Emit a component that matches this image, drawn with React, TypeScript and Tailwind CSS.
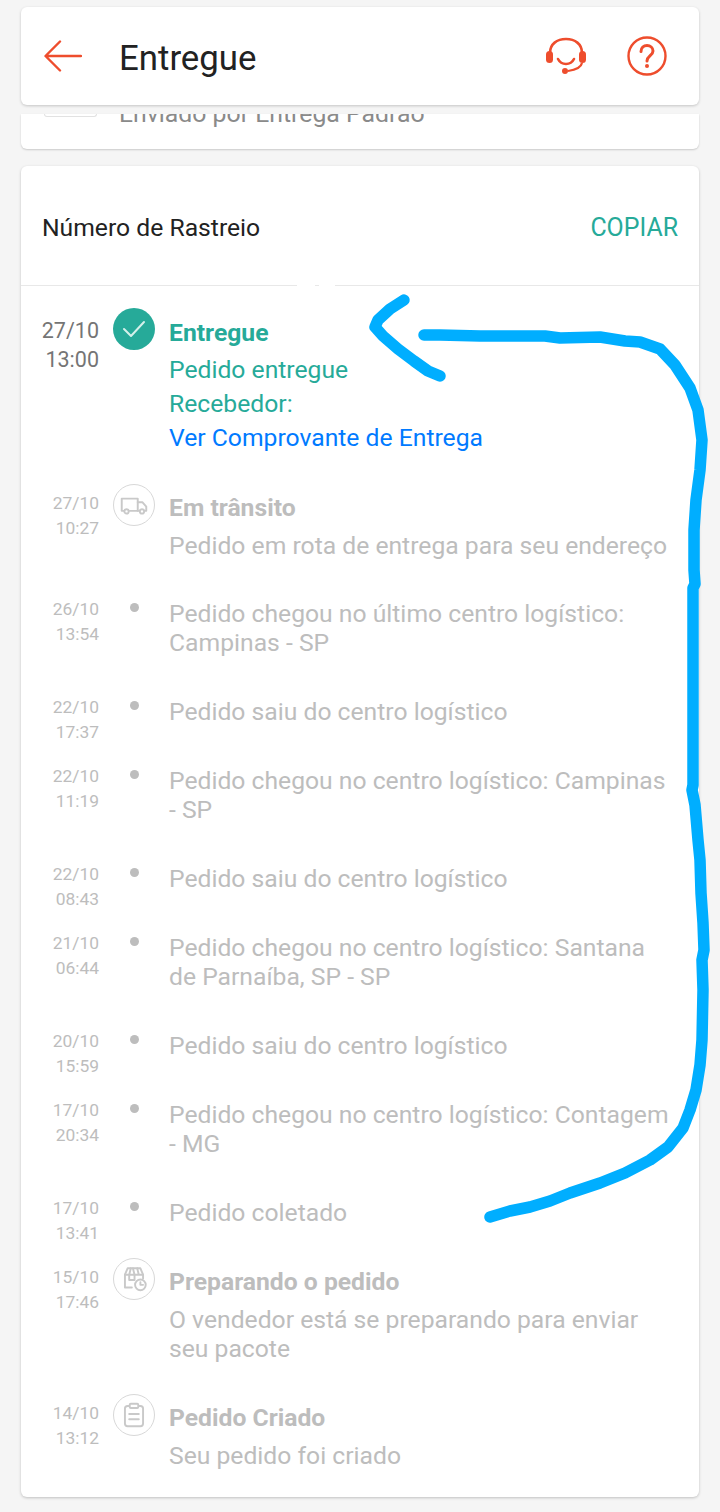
import React from "react";

const font = { fontFamily: "Roboto, 'Noto Sans', sans-serif" };

type Row = {
  date: string;
  time: string;
  title?: string;
  body: string;
  icon?: "truck" | "box" | "clip";
  pb?: string;
};

const rows: Row[] = [
  { date: "27/10", time: "10:27", title: "Em trânsito", body: "Pedido em rota de entrega para seu endereço", icon: "truck", pb: "pb-[39px]" },
  { date: "26/10", time: "13:54", body: "Pedido chegou no último centro logístico: Campinas - SP" },
  { date: "22/10", time: "17:37", body: "Pedido saiu do centro logístico" },
  { date: "22/10", time: "11:19", body: "Pedido chegou no centro logístico: Campinas - SP" },
  { date: "22/10", time: "08:43", body: "Pedido saiu do centro logístico" },
  { date: "21/10", time: "06:44", body: "Pedido chegou no centro logístico: Santana de Parnaíba, SP - SP" },
  { date: "20/10", time: "15:59", body: "Pedido saiu do centro logístico" },
  { date: "17/10", time: "20:34", body: "Pedido chegou no centro logístico: Contagem - MG" },
  { date: "17/10", time: "13:41", body: "Pedido coletado" },
  { date: "15/10", time: "17:46", title: "Preparando o pedido", body: "O vendedor está se preparando para enviar seu pacote", icon: "box" },
  { date: "14/10", time: "13:12", title: "Pedido Criado", body: "Seu pedido foi criado", icon: "clip", pb: "pb-[26px]" },
];

function RowIcon({ icon }: { icon: "truck" | "box" | "clip" }) {
  return (
    <div className="w-[42px] h-[42px] rounded-full border border-[#d8d8d8] flex items-center justify-center">
      <svg width="32" height="32" viewBox="0 0 30 30" fill="none" stroke="#c9c9c9" strokeWidth="1.8" strokeLinejoin="round" strokeLinecap="round">
        {icon === "truck" && (
          <>
            <path d="M5.500 20.500H3.500V9h15v11.500H11" />
            <path d="M18.500 12.500h4.500l3.500 4v4h-1.500M18.500 20.500h1.500" />
            <circle cx="8" cy="21" r="2" />
            <circle cx="22.500" cy="21" r="2" />
          </>
        )}
        {icon === "box" && (
          <>
            <path d="M13 23H6.500V11L9 5h12l2.500 6v3.500" />
            <path d="M6.500 11h17M12 5l-1.500 6v5h5v-5L14 5M18 5l1.500 6" />
            <circle cx="21" cy="20.500" r="5" />
            <path d="M21 18v2.500h2.500" />
          </>
        )}
        {icon === "clip" && (
          <>
            <rect x="6.500" y="6.500" width="17" height="19" rx="2.500" />
            <rect x="11" y="4.500" width="8" height="4" rx="1" fill="#fff" />
            <path d="M10.500 14h9M10.500 19h9" />
          </>
        )}
      </svg>
    </div>
  );
}

export default function App() {
  return (
    <div className="relative w-[720px] h-[1512px] overflow-hidden bg-[#f5f5f5] px-[21px] pt-[7px]" style={font}>
      {/* Top bar */}
      <header className="h-[98px] bg-white rounded-[6px] shadow-[0_1px_3px_rgba(0,0,0,0.2)] flex items-center pl-[23px] pr-[32px]">
        <svg width="38" height="32" viewBox="0 0 38 32" fill="none" stroke="#ee4d2d" strokeWidth="2.400" strokeLinecap="round" strokeLinejoin="round">
          <path d="M37 16H2M16 1.500 1.500 16 16 30.500" />
        </svg>
        <h1 className="ml-[37px] text-[34.800px] leading-[38px] text-[#222] font-normal pt-[4px]">Entregue</h1>
        <svg width="42" height="38" viewBox="0 0 42 38" fill="none" className="ml-auto mr-[40px]">
          <path d="M5 20V16C5 7 12 2 21 2s16 5 16 14v4" stroke="#ee4d2d" strokeWidth="2.600" />
          <rect x="1" y="14" width="7" height="12" rx="3.500" fill="#ee4d2d" />
          <rect x="34" y="14" width="7" height="12" rx="3.500" fill="#ee4d2d" />
          <path d="M13 22c2 4 5 5 8 5s6-1 8-5" stroke="#ee4d2d" strokeWidth="2.600" strokeLinecap="round" />
          <path d="M37 26c-1 5-7 7-14 8" stroke="#ee4d2d" strokeWidth="2.200" />
          <circle cx="20" cy="34" r="3" fill="#ee4d2d" />
        </svg>
        <svg width="40" height="40" viewBox="0 0 40 40" fill="none">
          <circle cx="20" cy="20" r="18.500" stroke="#ee4d2d" strokeWidth="2.400" />
          <path d="M14 15.500c0-3.800 2.700-6 6-6s6 2.200 6 5.500c0 4.500-6 5-6 10" stroke="#ee4d2d" strokeWidth="3" strokeLinecap="round" />
          <circle cx="20" cy="30" r="2" fill="#ee4d2d" />
        </svg>
      </header>

      {/* Clipped card behind the bar */}
      <section className="mt-[9px] h-[35px] bg-white rounded-b-[6px] shadow-[0_1px_2px_rgba(0,0,0,0.18)] overflow-hidden flex items-start pl-[23px]">
        <div className="w-[53px] h-[3px] rounded-b-[4px] border-b border-x border-[#e2e2e2]" />
        <span className="ml-[22px] -mt-[15px] text-[24.800px] leading-[29px] text-[#8a8a8a] whitespace-nowrap">Enviado por Entrega Padrão</span>
      </section>

      {/* Tracking card */}
      <section className="mt-[17px] h-[1331px] bg-white rounded-[6px] shadow-[0_1px_3px_rgba(0,0,0,0.22)]">
        <div className="relative h-[120px] border-b border-[#e8e8e8] flex items-center justify-between pl-[21px] pr-[21px] pt-[4px]">
          <span className="text-[24.700px] leading-[29px] text-[#222]">Número de Rastreio</span>
          <span className="text-[24.900px] leading-[29px] text-[#26aa99]">COPIAR</span>
          <div className="absolute left-[276px] -bottom-px w-[18px] h-[2px] bg-white" />
          <div className="absolute left-[298px] -bottom-px w-[16px] h-[2px] bg-white" />
        </div>

        {/* Delivered */}
        <div className="flex pt-[22px] pb-[38px]">
          <div className="w-[78px] pt-[8px] text-right text-[21.500px] leading-[29px] text-[#757575]">
            <div>27/10</div>
            <div>13:00</div>
          </div>
          <div className="ml-[14px] w-[42px] h-[42px] rounded-full bg-[#26aa99] flex items-center justify-center">
            <svg width="26" height="20" viewBox="0 0 26 20" fill="none" stroke="#d4f0ea" strokeWidth="2" strokeLinecap="round" strokeLinejoin="round">
              <path d="M3 10l7 7L23 3" />
            </svg>
          </div>
          <div className="ml-[14px] pt-[10px] text-[24.700px] text-[#26aa99]">
            <div className="font-bold leading-[29px]">Entregue</div>
            <div className="mt-[6px] leading-[34px]">Pedido entregue</div>
            <div className="leading-[34px]">Recebedor:</div>
            <div className="leading-[34px] text-[#007aff]">Ver Comprovante de Entrega</div>
          </div>
        </div>

        {rows.map((r, i) => (
          <div key={i} className={`flex ${r.pb ?? "pb-[40px]"}`}>
            <div className="w-[78px] shrink-0 text-right text-[17.400px] leading-[25px] text-[#bdbdbd] -mt-[2px] h-[29px]">
              <div>{r.date}</div>
              <div>{r.time}</div>
            </div>
            <div className="ml-[14px] w-[42px] shrink-0 flex justify-center">
              {r.icon ? (
                <div className="-mt-[9px]">
                  <RowIcon icon={r.icon} />
                </div>
              ) : (
                <div className="mt-[4px] w-[9px] h-[9px] rounded-full bg-[#bdbdbd]" />
              )}
            </div>
            <div className="ml-[14px] w-[507px] text-[24.700px] leading-[29px] text-[#bdbdbd]">
              {r.title && <div className="font-bold mb-[9px]">{r.title}</div>}
              <div>{r.body}</div>
            </div>
          </div>
        ))}
      </section>

      {/* Hand-drawn arrow over the page */}
      <svg width="720" height="1512" viewBox="0 0 720 1512" fill="none" className="absolute left-0 top-0 pointer-events-none" stroke="#00aeff" strokeWidth="11.500" strokeLinecap="round" strokeLinejoin="round">
        <path d="M404 300 390 309 378 320 375 327 383 336 398 349 414 361 428 371 440 376" />
        <path d="M424 335H440L480 336H545L560 338 600 337 625 341 640 342 660 349 675 365 690 388 698 410 702 440 700 470 696 500 694 530 694 570 695 584 693 588V785L692 790 695 805 698 840 700 860 701 893 703 923 704 950 702 960 703 990 702 1040 700 1065 696 1090 690 1110 683 1128 668 1147 650 1160 625 1173 600 1183 570 1193 550 1201 530 1207 510 1211 490 1217" />
      </svg>
    </div>
  );
}
